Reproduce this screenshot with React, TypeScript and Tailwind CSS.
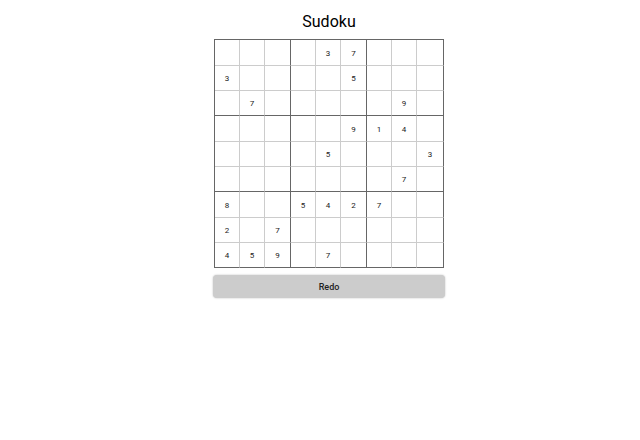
const board: number[][] = [
  [0, 0, 0, 0, 3, 7, 0, 0, 0],
  [3, 0, 0, 0, 0, 5, 0, 0, 0],
  [0, 7, 0, 0, 0, 0, 0, 9, 0],
  [0, 0, 0, 0, 0, 9, 1, 4, 0],
  [0, 0, 0, 0, 5, 0, 0, 0, 3],
  [0, 0, 0, 0, 0, 0, 0, 7, 0],
  [8, 0, 0, 5, 4, 2, 7, 0, 0],
  [2, 0, 7, 0, 0, 0, 0, 0, 0],
  [4, 5, 9, 0, 7, 0, 0, 0, 0],
];

const columnWidths = [
  "w-[25px]", "w-[25px]", "w-[26px]",
  "w-[25px]", "w-[25px]", "w-[26px]",
  "w-[25px]", "w-[25px]", "w-[27px]",
];

function Cell({ value, row, col }: { value: number; row: number; col: number }) {
  const right = col % 3 === 2 ? "border-r-[#666]" : "border-r-[#ccc]";
  const bottom = row % 3 === 2 ? "border-b-[#666]" : "border-b-[#ccc]";
  return (
    <td className={`border-r border-b px-0 pt-0.5 pb-0 text-center align-middle ${right} ${bottom}`}>
      {value || ""}
    </td>
  );
}

export default function App() {
  return (
    <main className="flex flex-col items-center bg-white pt-2.5 pb-4 pl-[18px] font-['Roboto',sans-serif] text-black">
      <h1 className="text-base leading-6">Sudoku</h1>
      <table className="mt-[5px] table-fixed w-[230px] border-separate border-spacing-0 border-t border-l border-[#666] text-[8px] leading-3 text-[#222]">
        <colgroup>
          {columnWidths.map((width, i) => (
            <col key={i} className={width} />
          ))}
        </colgroup>
        <tbody>
          {board.map((cells, row) => (
            <tr key={row} className={row % 3 === 0 ? "h-[26px]" : "h-[25px]"}>
              {cells.map((value, col) => (
                <Cell key={col} value={value} row={row} col={col} />
              ))}
            </tr>
          ))}
        </tbody>
      </table>
      <button
        type="button"
        className="mt-[7px] h-[23px] w-[232px] rounded bg-[#ccc] text-[9px] leading-3 font-medium text-[#222] shadow-[0_0_2px_#bbb]"
      >
        Redo
      </button>
    </main>
  );
}
